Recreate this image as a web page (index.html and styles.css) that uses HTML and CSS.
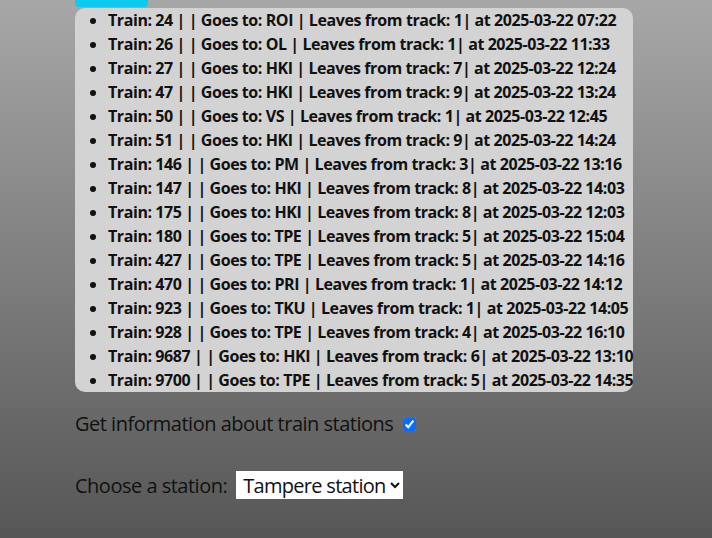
FILE: index.html
```html
<!DOCTYPE html>
<html>
<head>
<meta charset="utf-8">
<link rel="stylesheet" href="styles.css">
</head>
<body>
<div class="page">
  <button class="info-btn">Departures</button>
  <ul class="trains">
    <li>Train: 24 | | Goes to: ROI | Leaves from track: 1| at 2025-03-22 07:22</li>
    <li>Train: 26 | | Goes to: OL | Leaves from track: 1| at 2025-03-22 11:33</li>
    <li>Train: 27 | | Goes to: HKI | Leaves from track: 7| at 2025-03-22 12:24</li>
    <li>Train: 47 | | Goes to: HKI | Leaves from track: 9| at 2025-03-22 13:24</li>
    <li>Train: 50 | | Goes to: VS | Leaves from track: 1| at 2025-03-22 12:45</li>
    <li>Train: 51 | | Goes to: HKI | Leaves from track: 9| at 2025-03-22 14:24</li>
    <li>Train: 146 | | Goes to: PM | Leaves from track: 3| at 2025-03-22 13:16</li>
    <li>Train: 147 | | Goes to: HKI | Leaves from track: 8| at 2025-03-22 14:03</li>
    <li>Train: 175 | | Goes to: HKI | Leaves from track: 8| at 2025-03-22 12:03</li>
    <li>Train: 180 | | Goes to: TPE | Leaves from track: 5| at 2025-03-22 15:04</li>
    <li>Train: 427 | | Goes to: TPE | Leaves from track: 5| at 2025-03-22 14:16</li>
    <li>Train: 470 | | Goes to: PRI | Leaves from track: 1| at 2025-03-22 14:12</li>
    <li>Train: 923 | | Goes to: TKU | Leaves from track: 1| at 2025-03-22 14:05</li>
    <li>Train: 928 | | Goes to: TPE | Leaves from track: 4| at 2025-03-22 16:10</li>
    <li>Train: 9687 | | Goes to: HKI | Leaves from track: 6| at 2025-03-22 13:10</li>
    <li>Train: 9700 | | Goes to: TPE | Leaves from track: 5| at 2025-03-22 14:35</li>
  </ul>
  <p class="toggle-row">Get information about train stations <input type="checkbox" class="check" checked></p>
  <p class="station-row">
    <label for="station">Choose a station:</label>
    <select id="station" class="station-select">
      <option>Tampere station</option>
    </select>
  </p>
</div>
</body>
</html>
```

FILE: styles.css
```css
html, body {
  margin: 0;
  height: 100%;
}
body {
  background: linear-gradient(#a7a7a7, #565656);
  font-family: "Open Sans", "Noto Sans", sans-serif;
  color: #111;
  overflow: hidden;
}
.page {
  padding-left: 75px;
  margin-top: -31px;
}
.info-btn {
  display: block;
  width: 73px;
  height: 38px;
  border: none;
  border-radius: 4px;
  background: #0dcaf0;
  color: #000;
  font-size: 16px;
  padding: 0;
  margin: 0 0 1px 0;
}
.trains {
  width: fit-content;
  margin: 0;
  padding: 0 0 0 33px;
  background: #d3d3d3;
  border-radius: 10px;
  font-weight: bold;
  font-size: 16px;
  line-height: 24px;
  white-space: nowrap;
  letter-spacing: -0.42px;
}
.toggle-row {
  margin: 18px 0 0 0;
  font-size: 20px;
  line-height: 28px;
  letter-spacing: -0.5px;
  display: flex;
  align-items: center;
  gap: 10px;
}
.check {
  width: 13px;
  height: 13px;
  margin: 0;
  accent-color: #0a6cff;
}
.station-row {
  margin: 33px 0 0 0;
  font-size: 20px;
  letter-spacing: -0.5px;
  display: flex;
  align-items: center;
  gap: 9px;
}
.station-select {
  font-family: inherit;
  font-size: 20px;
  letter-spacing: -0.7px;
  height: 28px;
  width: 167px;
  border: none;
  background: #fff;
  color: #111;
  padding: 0 0 0 3px;
  border-radius: 0;
}
```
